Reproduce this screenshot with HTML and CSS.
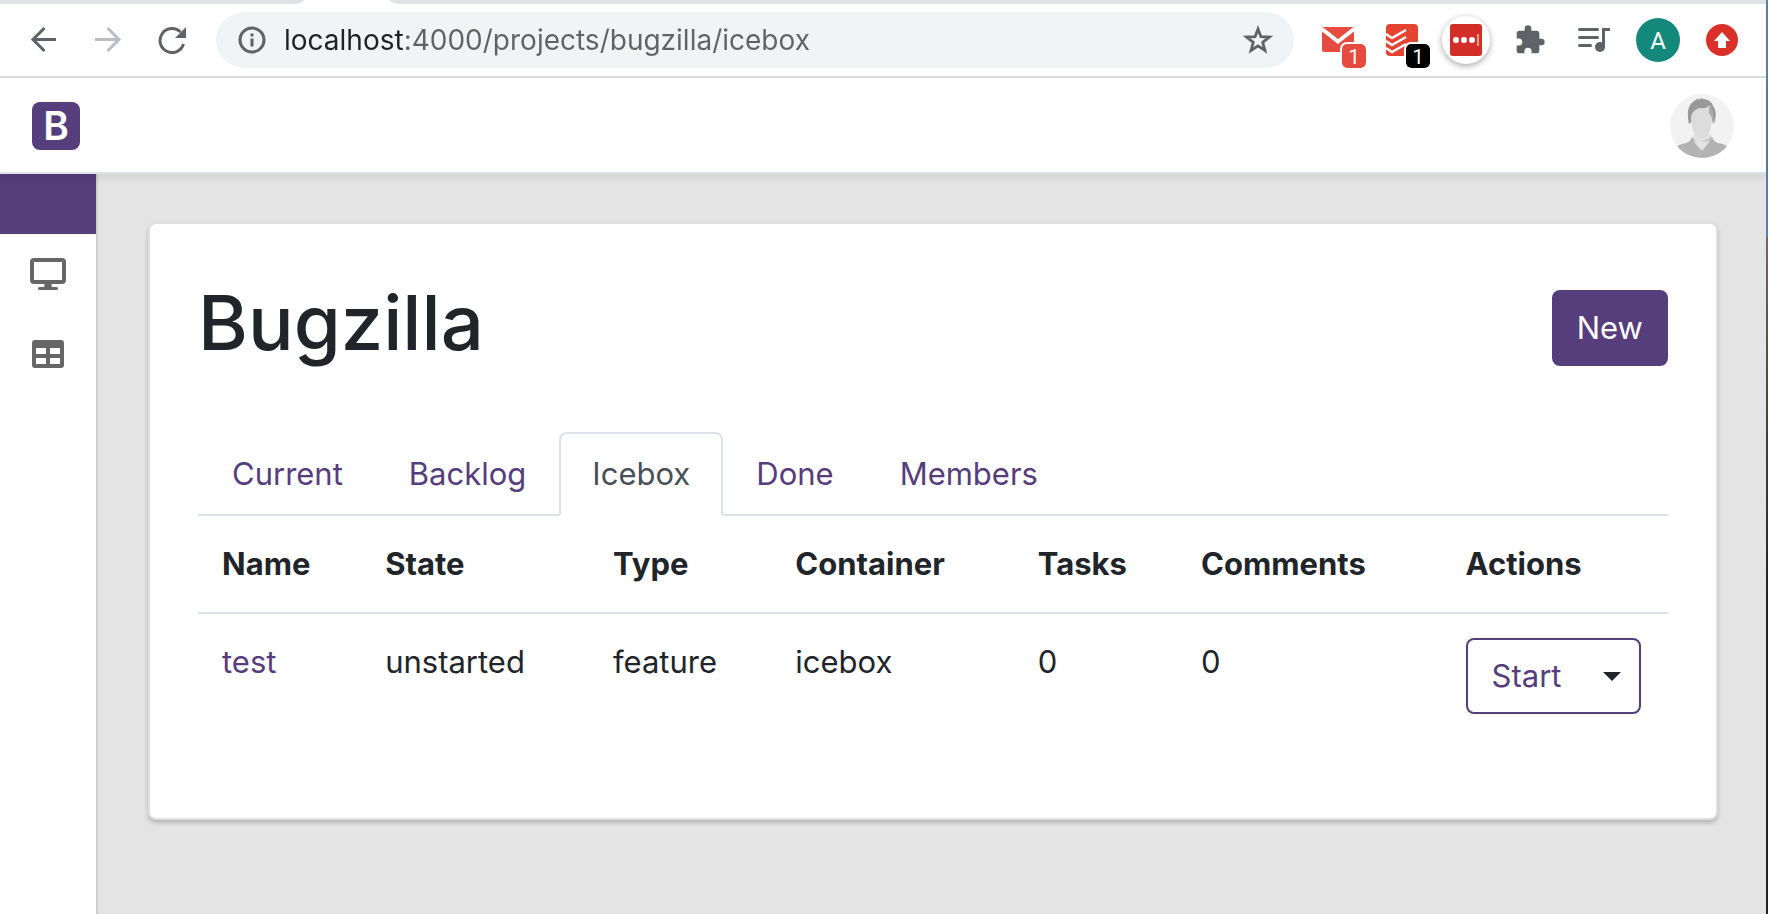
FILE: index.html
```html
<!DOCTYPE html>
<html lang="en">
<head>
<meta charset="utf-8">
<title>Bugzilla</title>
<link rel="stylesheet" href="styles.css">
</head>
<body>
<div class="window">
  <div class="tabstrip"><span class="tabstrip-left"></span><span class="tabstrip-right"></span></div>
  <div class="toolbar">
    <div class="toolbar-group">
      <button class="tool" aria-label="Back"><svg width="28" height="28" viewBox="0 0 28 28"><path d="M26 13.500H3M14.500 2 3 13.500l11.500 11.500" fill="none" stroke="#5f6368" stroke-width="3"/></svg></button>
      <button class="tool" aria-label="Forward"><svg width="28" height="28" viewBox="0 0 28 28"><path d="M1 13.500h24M13.500 2 25 13.500 13.500 25" fill="none" stroke="#bbbdbf" stroke-width="3"/></svg></button>
      <button class="tool" aria-label="Reload"><svg width="28" height="28" viewBox="0 0 28 28"><path d="M25.500 18A12 12 0 1 1 22.500 6" fill="none" stroke="#5f6368" stroke-width="3"/><path d="M28 1v11H17z" fill="#5f6368"/></svg></button>
    </div>
    <div class="address">
      <svg width="28" height="28" viewBox="0 0 28 28"><circle cx="14" cy="14" r="12" fill="none" stroke="#5f6368" stroke-width="3"/><path d="M12.500 7.500h3v3h-3zM12.500 12.500h3v8h-3z" fill="#5f6368"/></svg>
      <input class="address-input" type="text" aria-label="Address" value="localhost:4000/projects/bugzilla/icebox">
      <button class="star" aria-label="Bookmark"><svg width="30" height="30" viewBox="0 0 30 30"><path d="M15 4l2.900 7.700 8.400.4-6.600 5.200 2.300 8.200-7-4.600-7 4.600 2.300-8.200-6.600-5.200 8.400-.4z" fill="none" stroke="#5f6368" stroke-width="2.800"/></svg></button>
    </div>
    <div class="toolbar-group">
      <button class="tool" aria-label="Mail, 1 unread"><svg width="32" height="32" viewBox="0 0 32 32"><rect y="3" width="32" height="25" rx="2" fill="#e64b40"/><path d="M0 5 16 17.500 32 5" fill="none" stroke="#fff" stroke-width="4"/><path d="M2 3h28L16 14.500z" fill="#e64b40"/></svg><span class="badge badge-red">1</span></button>
      <button class="tool" aria-label="Tasks, 1 due"><svg width="32" height="32" viewBox="0 0 32 32"><rect width="32" height="32" rx="4" fill="#e44332"/><path d="M0 10l6 4 14-8M0 17l6 4 14-8M0 24l6 4 14-8" fill="none" stroke="#fff" stroke-width="2.400"/></svg><span class="badge badge-black">1</span></button>
      <button class="tool" aria-label="Passwords"><span class="disc"><svg width="32" height="32" viewBox="0 0 32 32"><rect width="32" height="32" rx="3" fill="#d32d27"/><g fill="#fff"><circle cx="6" cy="16" r="3"/><circle cx="14" cy="16" r="3"/><circle cx="22" cy="16" r="3"/></g><path d="M28 10v12" stroke="#fff" stroke-opacity=".7" stroke-width="1.500"/></svg></span></button>
      <button class="tool" aria-label="Extensions"><svg width="32" height="32" viewBox="0 0 24 24"><path d="M20.500 11H19V7c0-1.100-.9-2-2-2h-4V3.500a2.500 2.500 0 0 0-5 0V5H4c-1.100 0-1.990.9-1.990 2v3.800H3.500a2.700 2.700 0 0 1 0 5.400H2V20c0 1.100.9 2 2 2h3.800v-1.500a2.700 2.700 0 0 1 5.400 0V22H17c1.100 0 2-.9 2-2v-4h1.500a2.500 2.500 0 0 0 0-5z" fill="#5f6368"/></svg></button>
      <button class="tool" aria-label="Media controls"><svg width="32" height="32" viewBox="0 0 32 32"><path d="M1.500 5.500h18M1.500 13.500h18M1.500 21.500h11" stroke="#5f6368" stroke-width="3" stroke-linecap="round"/><path d="M25.500 23V5.500H32" fill="none" stroke="#5f6368" stroke-width="3"/><circle cx="22" cy="23" r="5" fill="#5f6368"/></svg></button>
      <button class="tool" aria-label="Profile"><span class="profile">A</span></button>
      <button class="tool" aria-label="Update"><svg width="32" height="32" viewBox="0 0 32 32"><circle cx="16" cy="16" r="16" fill="#d93029"/><path d="M16 8l8 9h-4v7h-8v-7H8z" fill="#fff"/></svg></button>
    </div>
  </div>
  <header class="navbar">
    <a class="logo" href="#" aria-label="Home">B</a>
    <button class="avatar" aria-label="Account"><svg width="64" height="64" viewBox="0 0 64 64"><defs><clipPath id="round"><circle cx="32" cy="32" r="32"/></clipPath></defs><g clip-path="url(#round)"><path d="M0 0h64v64H0z" fill="#f2f2f2"/><path d="M23 40h18l3 9-12 10-12-9z" fill="#e3e3e3"/><path d="M24 42c5 6 11 6 17 0v4c-5 3-11 2-17-4z" fill="#c9c9c9"/><path d="M19 30C17 20 17 12 24 7l5-3-1 2 4-2 1 1c5 0 9 3 10 7 4 5 3 12 1 18l-3-10-1-7z" fill="#999"/><path d="M21 23c1-5 4-8 9-9 5 1 8-1 10-3 1 4 2 8 2 13 0 11-4 21-10 21S21 35 21 23z" fill="#dcdcdc"/><path d="M39 12c5 4 6 11 4 18-1-4-1-8-4-11z" fill="#aaa"/><path d="M22 43l10 13 10-13c2 4 3 5 6 6 6 1 8 2 10 5v10H6V53c2-2 5-3 10-4 3-1 4-2 6-6z" fill="#b3b3b3"/><path d="M23 47l9 4 8-4-8 10z" fill="#e3e3e3"/></g></svg></button>
  </header>
  <div class="body">
    <nav class="sidebar" aria-label="Main">
      <div class="sidebar-top"></div>
      <a class="side-link" href="#" aria-label="Dashboard"><svg width="36" height="32" viewBox="0 0 36 32"><rect x="2" y="2" width="32" height="22" rx="2" fill="none" stroke="#666" stroke-width="4"/><path d="M15 25h6l1 4h4.500a1.500 1.500 0 0 1 0 3h-17a1.500 1.500 0 0 1 0-3H14z" fill="#666"/></svg></a>
      <a class="side-link" href="#" aria-label="Projects"><svg width="32" height="28" viewBox="0 0 32 28"><path fill-rule="evenodd" d="M3 0h26a3 3 0 0 1 3 3v22a3 3 0 0 1-3 3H3a3 3 0 0 1-3-3V3a3 3 0 0 1 3-3zM4 8v6h10V8zm14 0v6h10V8zM4 18v6h10v-6zm14 0v6h10v-6z" fill="#666"/></svg></a>
    </nav>
    <main class="content">
      <section class="card">
        <div class="card-head">
          <h1 class="title">Bugzilla</h1>
          <button class="btn-new">New</button>
        </div>
        <nav class="tabs" aria-label="Containers">
          <a class="tab" href="#">Current</a>
          <a class="tab" href="#">Backlog</a>
          <a class="tab tab-active" href="#" aria-current="page">Icebox</a>
          <a class="tab" href="#">Done</a>
          <a class="tab" href="#">Members</a>
        </nav>
        <table class="stories">
          <colgroup><col class="col-name"><col class="col-state"><col class="col-type"><col class="col-container"><col class="col-tasks"><col class="col-comments"><col></colgroup>
          <thead><tr><th>Name</th><th>State</th><th>Type</th><th>Container</th><th>Tasks</th><th>Comments</th><th>Actions</th></tr></thead>
          <tbody><tr>
            <td><a class="story-link" href="#">test</a></td><td>unstarted</td><td>feature</td><td>icebox</td><td>0</td><td>0</td>
            <td><div class="split"><button class="split-main">Start</button><button class="split-toggle" aria-label="More actions"><span class="caret"></span></button></div></td>
          </tr></tbody>
        </table>
      </section>
    </main>
  </div>
</div>
</body>
</html>
```
FILE: styles.css
```css
* { box-sizing: border-box; }

body {
  margin: 0;
  padding-right: 2px;
  min-height: 100vh;
  background: linear-gradient(#4f83ad 0, #4f83ad 236px, #75665d 238px, #51463a 400px, #20251b 600px, #20251b 100%);
  color: #212529;
  font-family: Inter, "Liberation Sans", sans-serif;
  font-size: 31px;
  line-height: 48px;
}

button {
  margin: 0;
  padding: 0;
  border: 0;
  background: none;
  color: inherit;
  font: inherit;
  cursor: pointer;
}

a { color: #563d7c; text-decoration: none; }
svg { display: block; flex: none; }

.window {
  display: flex;
  flex-direction: column;
  min-height: 100vh;
  background: #fff;
}

.tabstrip {
  display: flex;
  gap: 86px;
  height: 4px;
}
.tabstrip-left {
  width: 304px;
  background: #dee1e6;
  border-radius: 0 0 12px 0 / 0 0 4px 0;
}
.tabstrip-right {
  flex: 1;
  background: #dee1e6;
  border-radius: 0 0 0 12px / 0 0 0 4px;
}

.toolbar {
  display: flex;
  align-items: center;
  gap: 12px;
  height: 74px;
  padding: 0 12px;
  border-bottom: 2px solid #dadce0;
}
.toolbar-group { display: flex; }
.tool {
  position: relative;
  display: flex;
  align-items: center;
  justify-content: center;
  width: 64px;
  height: 56px;
}
.badge {
  position: absolute;
  right: 4px;
  bottom: 0;
  width: 24px;
  height: 24px;
  border-radius: 5px;
  color: #fff;
  font-family: Roboto, sans-serif;
  font-size: 20px;
  line-height: 26px;
  outline: 2px solid #fff;
}
.badge-red { background: #e64b40; }
.badge-black { background: #000; }
.disc {
  display: flex;
  align-items: center;
  justify-content: center;
  width: 48px;
  height: 48px;
  border-radius: 50%;
  background: #fff;
  box-shadow: 0 2px 6px rgba(0, 0, 0, .35);
}
.profile {
  width: 44px;
  height: 44px;
  border-radius: 50%;
  background: #13897b;
  color: #fff;
  font-family: Roboto, sans-serif;
  font-size: 24px;
  line-height: 46px;
}

.address {
  display: flex;
  flex: 1;
  align-items: center;
  gap: 18px;
  height: 56px;
  padding: 0 21px 0 22px;
  border-radius: 28px;
  background: #f1f3f4;
}
.address-input {
  flex: 1;
  min-width: 0;
  height: 48px;
  padding: 0;
  border: 0;
  outline: 0;
  background: linear-gradient(90deg, #202124 121px, #5f6368 121px);
  -webkit-background-clip: text;
  background-clip: text;
  -webkit-text-fill-color: transparent;
  color: #5f6368;
  font-family: inherit;
  font-size: 28px;
}

.navbar {
  position: relative;
  display: flex;
  align-items: center;
  justify-content: space-between;
  height: 96px;
  padding: 2px 32px 0;
  border-bottom: 2px solid #dee2e6;
  background: #fff;
  box-shadow: 0 4px 8px rgba(0, 0, 0, .08);
}
.logo {
  width: 48px;
  height: 48px;
  border-radius: 8px;
  background: #563d7c;
  color: #fff;
  font-size: 39px;
  font-weight: 600;
  text-align: center;
}

.body { display: flex; flex: 1; }
.sidebar {
  width: 98px;
  flex: none;
  border-right: 2px solid #ccc;
}
.sidebar-top { height: 60px; background: #563d7c; }
.side-link {
  display: flex;
  align-items: center;
  justify-content: center;
  height: 80px;
}

.content {
  flex: 1;
  min-width: 0;
  padding: 48px 48px 48px 50px;
  background: #e4e4e4;
}
.card {
  padding: 48px;
  border: 2px solid #dfdfdf;
  border-radius: 8px;
  background: #fff;
  box-shadow: 0 3px 4px rgba(0, 0, 0, .2);
}
.card-head {
  display: flex;
  align-items: flex-end;
  justify-content: space-between;
  margin-bottom: 60px;
}
.title {
  margin: 0;
  font-size: 76px;
  font-weight: 500;
  line-height: 100px;
}
.btn-new {
  height: 76px;
  margin-bottom: 6px;
  padding: 0 25px;
  border-radius: 8px;
  background: #563d7c;
  color: #fff;
}

.tabs {
  display: flex;
  padding-left: 1px;
  border-bottom: 2px solid #dee2e6;
}
.tab {
  margin-bottom: -2px;
  padding: 16px 31px;
  border: 2px solid transparent;
  border-radius: 8px 8px 0 0;
}
.tab-active {
  border-color: #dee2e6 #dee2e6 #fff;
  background: #fff;
  color: #495057;
}

.stories {
  width: 100%;
  margin-bottom: 32px;
  border-collapse: separate;
  border-spacing: 0;
  table-layout: fixed;
}
.stories th,
.stories td {
  padding: 24px;
  text-align: left;
  vertical-align: top;
}
.stories th {
  border-bottom: 2px solid #dee2e6;
  font-weight: 700;
}
.col-name { width: 11.1%; }
.col-state { width: 15.5%; }
.col-type { width: 12.4%; }
.col-container { width: 16.5%; }
.col-tasks { width: 11.1%; }
.col-comments { width: 18%; }

.split {
  display: inline-flex;
  height: 76px;
  vertical-align: top;
  border: 2px solid #563d7c;
  border-radius: 8px;
}
.split-main { padding: 0 24px; color: #563d7c; }
.split-toggle { padding: 0 18px; }
.caret {
  display: block;
  border: 9px solid transparent;
  border-top-color: #212529;
  border-bottom: 0;
}
```
